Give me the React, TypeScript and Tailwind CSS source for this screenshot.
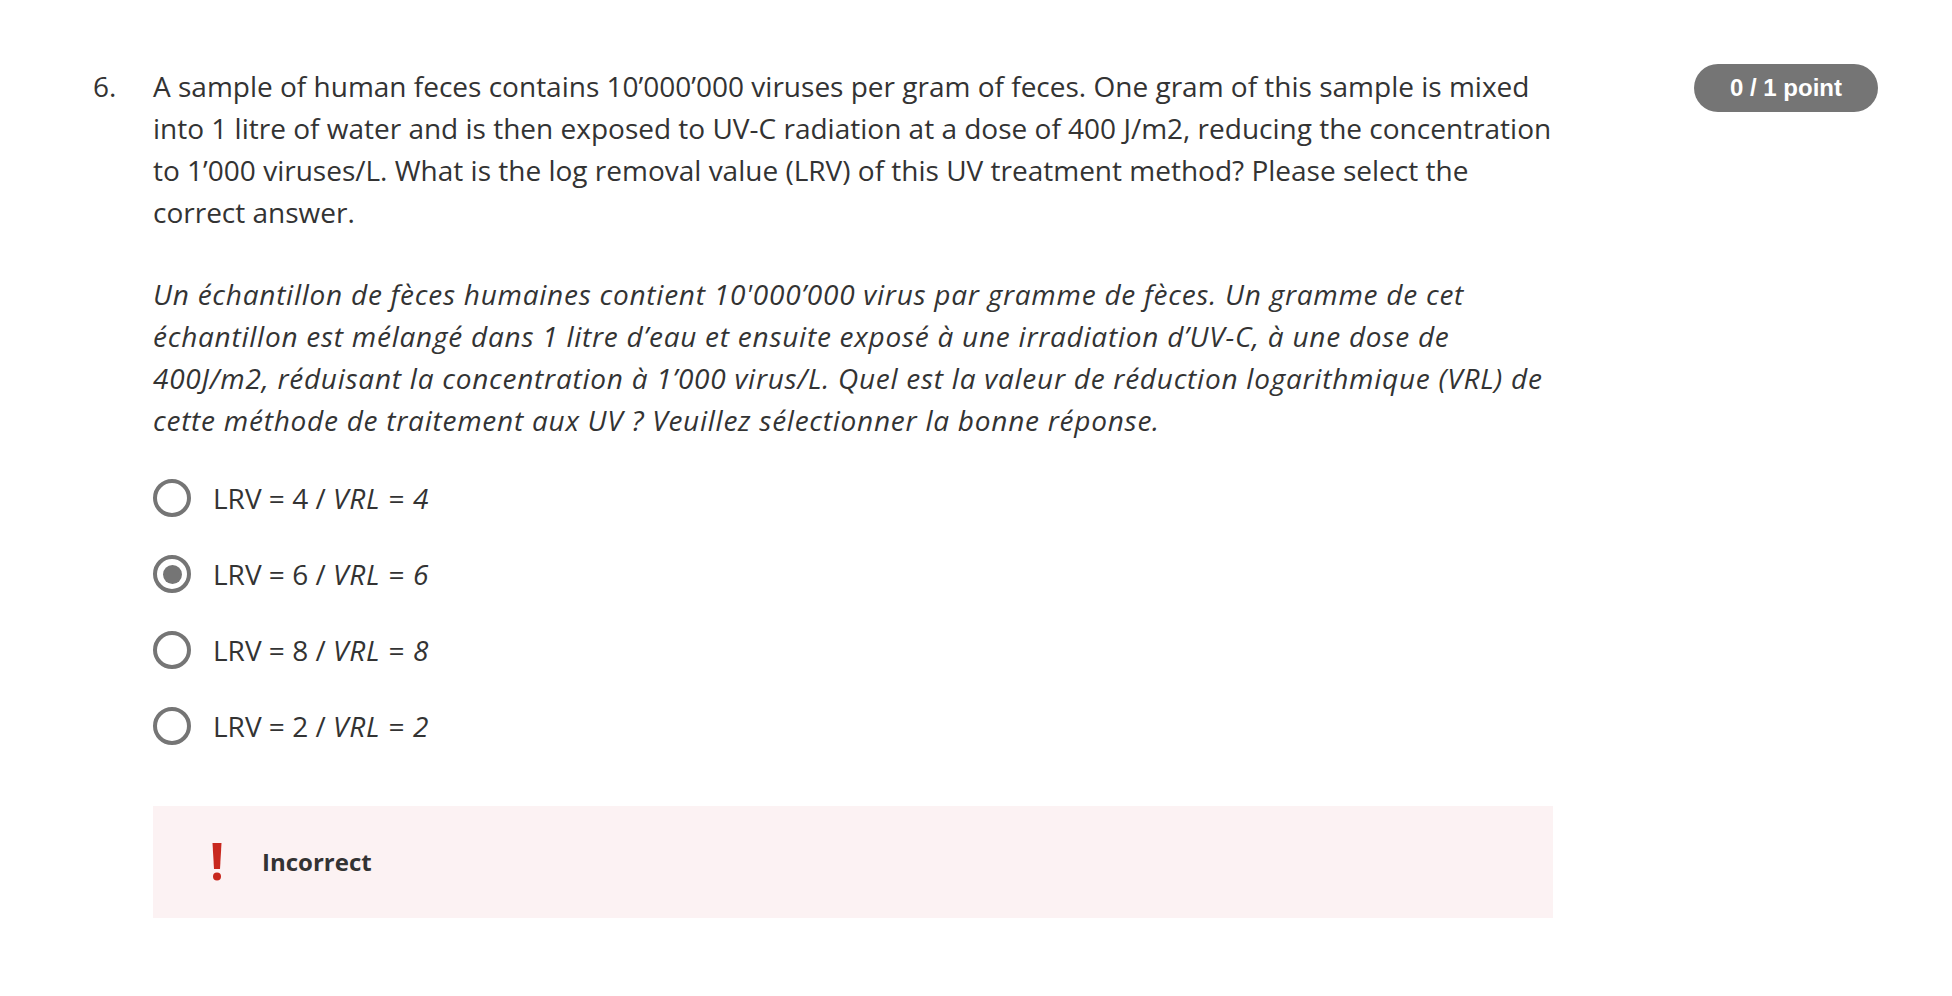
const options = [
  { value: "4", checked: false },
  { value: "6", checked: true },
  { value: "8", checked: false },
  { value: "2", checked: false },
];

function Radio({ checked }: { checked: boolean }) {
  return (
    <span className="flex h-[38px] w-[38px] shrink-0 items-center justify-center rounded-full border-4 border-[#757575]">
      {checked && <span className="h-[19px] w-[19px] rounded-full bg-[#757575]" />}
    </span>
  );
}

function AlertIcon() {
  return (
    <svg width="10" height="38" viewBox="0 0 10 38" className="shrink-0">
      <polygon points="0.5,0 9.5,0 8,26 2,26" fill="#c8281e" />
      <circle cx="5" cy="33.5" r="4" fill="#c8281e" />
    </svg>
  );
}

export default function App() {
  return (
    <div className="min-h-screen bg-white font-['Open_Sans',sans-serif] text-[#333333]">
      <div className="flex items-start pt-[65px]">
        {/* question number */}
        <div className="w-[153px] shrink-0 pl-[93px] text-[28px] leading-[42px]">6.</div>

        {/* question body */}
        <div className="w-[1401px] shrink-0">
          <p className="text-[28px] leading-[42px]">
            A sample of human feces contains 10’000’000 viruses per gram of feces. One gram of this sample is mixed
            into 1 litre of water and is then exposed to UV-C radiation at a dose of 400 J/m2, reducing the
            concentration to 1’000 viruses/L. What is the log removal value (LRV) of this UV treatment method? Please
            select the correct answer.
          </p>
          <p className="mt-[40px] text-[28px] italic leading-[42px] tracking-[0.75px]">
            Un échantillon de fèces humaines contient 10'000’000 virus par gramme de fèces. Un gramme de cet
            échantillon est mélangé dans 1 litre d’eau et ensuite exposé à une irradiation d’UV-C, à une dose de
            400J/m2, réduisant la concentration à 1’000 virus/L. Quel est la valeur de réduction logarithmique (VRL) de
            cette méthode de traitement aux UV ? Veuillez sélectionner la bonne réponse.
          </p>

          <div className="mt-[36px] flex flex-col gap-[34px]">
            {options.map((o) => (
              <label key={o.value} className="flex h-[42px] items-center gap-[22px]">
                <Radio checked={o.checked} />
                <span className="text-[28px] leading-[42px]">
                  LRV = {o.value} / <em className="tracking-[0.75px]">VRL = {o.value}</em>
                </span>
              </label>
            ))}
          </div>

          <div className="mt-[59px] flex h-[112px] w-[1400px] items-center gap-[40px] bg-[#fcf2f3] pl-[59px]">
            <AlertIcon />
            <span className="text-[24px] font-bold">Incorrect</span>
          </div>
        </div>

        {/* score badge */}
        <div className="ml-[140px] mt-[-1px] flex h-[48px] w-[184px] items-center justify-center rounded-full bg-[#757575] font-['Liberation_Sans',Arial,sans-serif] text-[24px] font-bold text-white">
          0 / 1 point
        </div>
      </div>
    </div>
  );
}
